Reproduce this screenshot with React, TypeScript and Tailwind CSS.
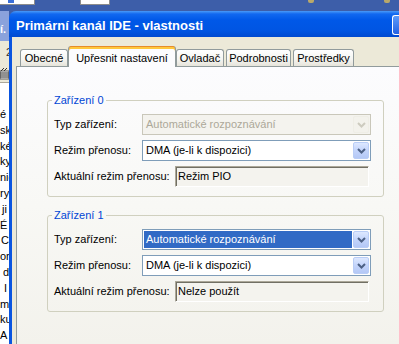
import React from "react";

function Chevron({ color }: { color: string }) {
  return (
    <svg width="9" height="6" viewBox="0 0 9 6">
      <path d="M1 1 L4.5 4.5 L8 1" fill="none" stroke={color} strokeWidth="2" />
    </svg>
  );
}

function Combo({ text, disabled = false, selected = false }: { text: string; disabled?: boolean; selected?: boolean }) {
  return (
    <div
      className={`h-[21px] w-[229px] flex border p-[1px] ${
        disabled ? "border-[#c9c7ba] bg-[#f4f3ee]" : "border-[#7f9db9] bg-white"
      }`}
    >
      <div
        className={`flex-1 flex items-center pl-[2px] mr-[1px] whitespace-nowrap ${
          selected ? "bg-[#316ac5] text-white" : disabled ? "text-[#aca899]" : "text-black"
        }`}
      >
        {text}
      </div>
      <div
        className={`w-[16px] flex items-center justify-center rounded-[2px] border ${
          disabled
            ? "border-[#efeee6] bg-[#f3f2ec]"
            : "border-[#b9cdf6] bg-[linear-gradient(to_bottom,#dde8ff,#c3d4fb_50%,#b4c8f6)]"
        }`}
      >
        <Chevron color={disabled ? "#cdcbbf" : "#4d6185"} />
      </div>
    </div>
  );
}

function ReadBox({ text }: { text: string }) {
  return (
    <div className="w-[194px] h-[21px] flex items-center pl-[2px] border border-t-[#aca899] border-l-[#aca899] border-r-white border-b-white shadow-[inset_1px_1px_0_#716f64] bg-[#f4f3ee] whitespace-nowrap">
      {text}
    </div>
  );
}

function Group({ title, children }: { title: string; children: React.ReactNode }) {
  return (
    <fieldset className="w-[337px] m-0 border border-[#d0d0bf] rounded-[3px] pl-[4px] pr-0 pt-[7px] pb-[9px]">
      <legend className="px-[2px] text-[#0046d5] leading-[13px]">{title}</legend>
      <div className="flex flex-col gap-[5px] pl-[2px]">{children}</div>
    </fieldset>
  );
}

function Row({ label, w, children }: { label: string; w: string; children: React.ReactNode }) {
  return (
    <div className="flex items-center h-[21px]">
      <div className={`${w} whitespace-nowrap`}>{label}</div>
      {children}
    </div>
  );
}

function Tab({ label, w, ml }: { label: string; w: string; ml: string }) {
  return (
    <div
      className={`${w} ${ml} h-[17px] flex items-center justify-center border border-b-0 border-[#919b9c] rounded-t-[3px] bg-[linear-gradient(to_bottom,#ffffff,#f4f4f0_60%,#e6e4da)] whitespace-nowrap`}
    >
      {label}
    </div>
  );
}

const leftLines: { t: string; c: string }[] = [
  { t: "é", c: "pl-[0px]" },
  { t: "skó", c: "pl-[0px]" },
  { t: "ké", c: "pl-[0px]" },
  { t: "ky", c: "pl-[0px]" },
  { t: "nic", c: "pl-[0px]" },
  { t: "ry", c: "pl-[0px]" },
  { t: "ji", c: "pl-[2px]" },
  { t: "É", c: "pl-[0px]" },
  { t: "C", c: "pl-[1px]" },
  { t: "or", c: "pl-[0px]" },
  { t: "d", c: "pl-[3px]" },
  { t: "I", c: "pl-[4px]" },
  { t: "mi", c: "pl-[0px]" },
  { t: "ku", c: "pl-[0px]" },
  { t: "A", c: "pl-[0px]" },
];

export default function App() {
  return (
    <div className="w-[399px] h-[344px] overflow-hidden flex flex-col bg-[#3d5ea9] font-['Liberation_Sans',Arial,sans-serif] text-[11px] text-black">
      {/* top band (background windows) */}
      <div className="h-[11px] flex items-start shrink-0">
        <div className="w-[35px] h-[5px] bg-white border-b border-r border-[#8c8c8c] flex items-start pl-[8px]">
          <div className="w-[6px] h-[3px] bg-[#3a6fd8]" />
        </div>
        <div className="ml-[45px] w-[30px] h-[5px] bg-white border-b border-l border-r border-[#8c8c8c]" />
        <div className="ml-[198px] w-[6px] h-[3px] rounded-b-[2px] bg-[#b9a86a]" />
        <div className="ml-[70px] w-[6px] h-[3px] rounded-b-[2px] bg-[#b9a86a]" />
      </div>

      <div className="flex flex-1 min-h-0">
        {/* left strip: background window */}
        <div className="w-[9px] shrink-0 flex flex-col overflow-hidden">
          <div className="h-[31px] bg-[#8aa2dc] text-white font-bold leading-none pt-[13px] whitespace-nowrap">í.</div>
          <div className="h-[26px] bg-[#ece9d8] text-[#333] pl-[6px] pt-[6px] leading-none">2</div>
          <div className="h-[18px] bg-[#ece9d8] flex items-center">
            <svg width="9" height="14" viewBox="0 0 9 14">
              <rect x="0" y="4" width="9" height="8" fill="#fff" stroke="#555" strokeWidth="1" />
              <path d="M0 6 H9 M0 8 H9 M0 10 H9" stroke="#222" strokeWidth="1" />
              <path d="M1 4 L4 1 M4 4 L7 1" stroke="#333" strokeWidth="1" />
            </svg>
          </div>
          <div className="flex-1 bg-white border-t border-[#aca899] pt-[24px]">
            {leftLines.map((l, i) => (
              <div key={i} className={`h-[15.8px] leading-[15.8px] whitespace-nowrap ${l.c}`}>
                {l.t}
              </div>
            ))}
          </div>
        </div>

        {/* dialog */}
        <div className="flex-1 min-w-0 flex flex-col">
          <div className="h-[26px] shrink-0 flex rounded-tl-[7px] bg-[linear-gradient(to_bottom,#4a9af8_0px,#1168f0_3px,#0058e8_9px,#0055e2_20px,#004ad0_26px)] pl-[7px]">
            <div className="self-center pt-[3px] text-white font-bold text-[13px] leading-none whitespace-nowrap">
              Primární kanál IDE - vlastnosti
            </div>
            <div className="ml-auto mt-[4px] h-[20px] w-[7px] rounded-l-[3px] border border-r-0 border-white bg-[linear-gradient(to_bottom,#5d9bfa,#2563e3)]" />
          </div>

          <div className="flex-1 min-h-0 flex">
            <div className="w-[3px] shrink-0 bg-[#0a55e0]" />
            <div className="flex-1 min-w-0 bg-[#ece9d8] pl-[4px] pt-[9px] flex flex-col">
              {/* tabs */}
              <div className="h-[20px] flex items-end shrink-0">
                <Tab label="Obecné" w="w-[48px]" ml="ml-[4px]" />
                <div className="relative z-10 w-[108px] h-[21px] -mb-[1px] flex items-start justify-center pt-[4px] border-x border-[#919b9c] rounded-t-[3px] bg-[#fcfcfe] shadow-[inset_0_1px_0_#e68b2c,inset_0_3px_0_#ffc83c] whitespace-nowrap">
                  Upřesnit nastavení
                </div>
                <Tab label="Ovladač" w="w-[48px]" ml="ml-0" />
                <Tab label="Podrobnosti" w="w-[65px]" ml="ml-[2px]" />
                <Tab label="Prostředky" w="w-[61px]" ml="ml-[2px]" />
              </div>

              {/* panel */}
              <div className="flex-1 min-h-0 border-t border-l border-[#919b9c] bg-[linear-gradient(to_bottom,#fcfcfe,#f8f8f5_50%,#f3f2ec)] pl-[30px] pt-[27px] flex flex-col">
                <Group title="Zařízení 0">
                  <Row label="Typ zařízení:" w="w-[88px]">
                    <Combo text="Automatické rozpoznávání" disabled />
                  </Row>
                  <Row label="Režim přenosu:" w="w-[88px]">
                    <Combo text="DMA (je-li k dispozici)" />
                  </Row>
                  <Row label="Aktuální režim přenosu:" w="w-[121px]">
                    <ReadBox text="Režim PIO" />
                  </Row>
                </Group>
                <div className="mt-[12px]">
                  <Group title="Zařízení 1">
                    <Row label="Typ zařízení:" w="w-[88px]">
                      <Combo text="Automatické rozpoznávání" selected />
                    </Row>
                    <Row label="Režim přenosu:" w="w-[88px]">
                      <Combo text="DMA (je-li k dispozici)" />
                    </Row>
                    <Row label="Aktuální režim přenosu:" w="w-[121px]">
                      <ReadBox text="Nelze použít" />
                    </Row>
                  </Group>
                </div>
              </div>
            </div>
          </div>
        </div>
      </div>
    </div>
  );
}
